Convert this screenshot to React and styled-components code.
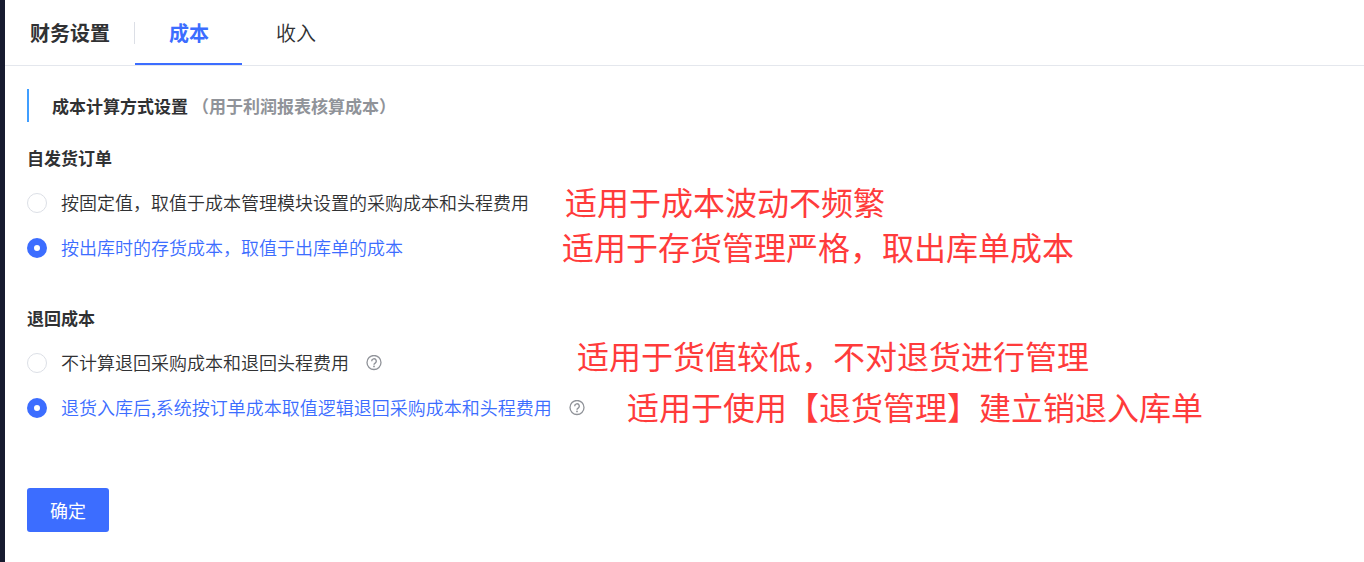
import { useState } from 'react';
import styled, { createGlobalStyle } from 'styled-components';

const GlobalStyle = createGlobalStyle`
  * {
    box-sizing: border-box;
  }
  body {
    margin: 0;
    background: #fff;
    color: #303133;
    font-family: 'Noto Sans CJK SC', sans-serif;
  }
`;

const tabs = [
  { key: 'cost', label: '成本' },
  { key: 'income', label: '收入' },
];

const groups = [
  {
    name: 'selfShip',
    title: '自发货订单',
    options: [
      {
        value: 'fixed',
        label: '按固定值，取值于成本管理模块设置的采购成本和头程费用',
        note: '适用于成本波动不频繁',
        noteStart: 538,
      },
      {
        value: 'stock',
        label: '按出库时的存货成本，取值于出库单的成本',
        note: '适用于存货管理严格，取出库单成本',
        noteStart: 535,
      },
    ],
  },
  {
    name: 'returned',
    title: '退回成本',
    options: [
      {
        value: 'none',
        label: '不计算退回采购成本和退回头程费用',
        help: true,
        note: '适用于货值较低，不对退货进行管理',
        noteStart: 550,
        noteAlign: 'start',
      },
      {
        value: 'order',
        label: '退货入库后,系统按订单成本取值逻辑退回采购成本和头程费用',
        help: true,
        note: '适用于使用【退货管理】建立销退入库单',
        noteStart: 600,
      },
    ],
  },
];

function HelpIcon() {
  return (
    <svg width="16" height="16" viewBox="0 0 16 16" fill="none" stroke="#909399">
      <circle cx="8" cy="7.5" r="7" strokeWidth="1.3" />
      <path d="M5.7 6.2a2.3 2.3 0 1 1 3.5 1.9c-.8.5-1.2.8-1.2 1.6" strokeWidth="1.4" />
      <circle cx="8" cy="11.4" r="0.9" fill="#909399" stroke="none" />
    </svg>
  );
}

export default function App() {
  const [tab, setTab] = useState('cost');
  const [values, setValues] = useState({ selfShip: 'stock', returned: 'order' });

  return (
    <>
      <GlobalStyle />
      <Page>
        <Header>
          <PageTitle>财务设置</PageTitle>
          <Tabs>
            {tabs.map((item) => (
              <Tab
                key={item.key}
                type="button"
                $active={tab === item.key}
                onClick={() => setTab(item.key)}
              >
                {item.label}
              </Tab>
            ))}
          </Tabs>
        </Header>

        <Content>
          <SectionTitle>
            成本计算方式设置
            <Hint>（用于利润报表核算成本）</Hint>
          </SectionTitle>

          {groups.map((group) => (
            <Group key={group.name}>
              <GroupTitle>{group.title}</GroupTitle>
              {group.options.map((option) => {
                const checked = values[group.name] === option.value;
                return (
                  <OptionRow key={option.value} $noteStart={option.noteStart}>
                    <OptionCell>
                      <OptionLabel $checked={checked}>
                        <Radio
                          type="radio"
                          name={group.name}
                          checked={checked}
                          onChange={() =>
                            setValues({ ...values, [group.name]: option.value })
                          }
                        />
                        <OptionText>{option.label}</OptionText>
                      </OptionLabel>
                      {option.help && <HelpIcon />}
                    </OptionCell>
                    <Note $align={option.noteAlign}>{option.note}</Note>
                  </OptionRow>
                );
              })}
            </Group>
          ))}

          <SubmitButton type="button">确定</SubmitButton>
        </Content>
      </Page>
    </>
  );
}

const Page = styled.div`
  min-height: 100vh;
  border-left: 5px solid #171b2f;
`;

const Header = styled.header`
  display: flex;
  align-items: center;
  height: 66px;
  padding-left: 25px;
  border-bottom: 1px solid #e4e7ed;
`;

const PageTitle = styled.h1`
  margin: 0;
  padding-right: 24px;
  border-right: 1px solid #dcdfe6;
  font-size: 20px;
  line-height: 22px;
  font-weight: 700;
`;

const Tabs = styled.nav`
  display: flex;
  align-self: stretch;
`;

const Tab = styled.button`
  padding: 2px 33px 0 34px;
  border: 0;
  border-bottom: 2px solid ${({ $active }) => ($active ? '#3c6dff' : 'transparent')};
  background: none;
  color: ${({ $active }) => ($active ? '#3c6dff' : '#303133')};
  font-family: inherit;
  font-size: 20px;
  font-weight: ${({ $active }) => ($active ? 700 : 350)};
  cursor: pointer;
`;

const Content = styled.main`
  padding: 23px 22px 30px;
`;

const SectionTitle = styled.h2`
  display: flex;
  gap: 4px;
  margin: 0 0 14px;
  padding-left: 23px;
  border-left: 2px solid #409eff;
  font-size: 17px;
  line-height: 33px;
  font-weight: 700;
`;

const Hint = styled.span`
  color: #909399;
`;

const Group = styled.section`
  margin-bottom: 26px;
`;

const GroupTitle = styled.h3`
  margin: 0;
  font-size: 17px;
  line-height: 44px;
  font-weight: 700;
`;

const OptionRow = styled.div`
  display: grid;
  grid-template-columns: ${({ $noteStart }) => $noteStart}px 1fr;
  align-items: center;
  height: 45px;
`;

const OptionCell = styled.div`
  display: flex;
  align-items: center;
  gap: 17px;
`;

const OptionLabel = styled.label`
  display: flex;
  align-items: center;
  gap: 14px;
  color: ${({ $checked }) => ($checked ? '#3c6dff' : '#303133')};
  font-size: 18px;
  font-weight: 350;
  white-space: nowrap;
  cursor: pointer;
`;

const OptionText = styled.span`
  padding-bottom: 2px;
`;

const Radio = styled.input`
  appearance: none;
  width: 20px;
  height: 20px;
  margin: 0;
  border: 1px solid #dcdfe6;
  border-radius: 50%;
  background: #fff;

  &:checked {
    border: 7px solid #3c6dff;
  }
`;

const Note = styled.span`
  align-self: ${({ $align }) => $align || 'center'};
  padding-bottom: 4px;
  color: #ff3b3b;
  font-size: 32px;
  line-height: 30px;
  white-space: nowrap;
`;

const SubmitButton = styled.button`
  display: block;
  height: 44px;
  margin-top: 58px;
  padding: 0 23px;
  border: 0;
  border-radius: 3px;
  background: #3c6dff;
  color: #fff;
  font-family: inherit;
  font-size: 18px;
  cursor: pointer;
`;
